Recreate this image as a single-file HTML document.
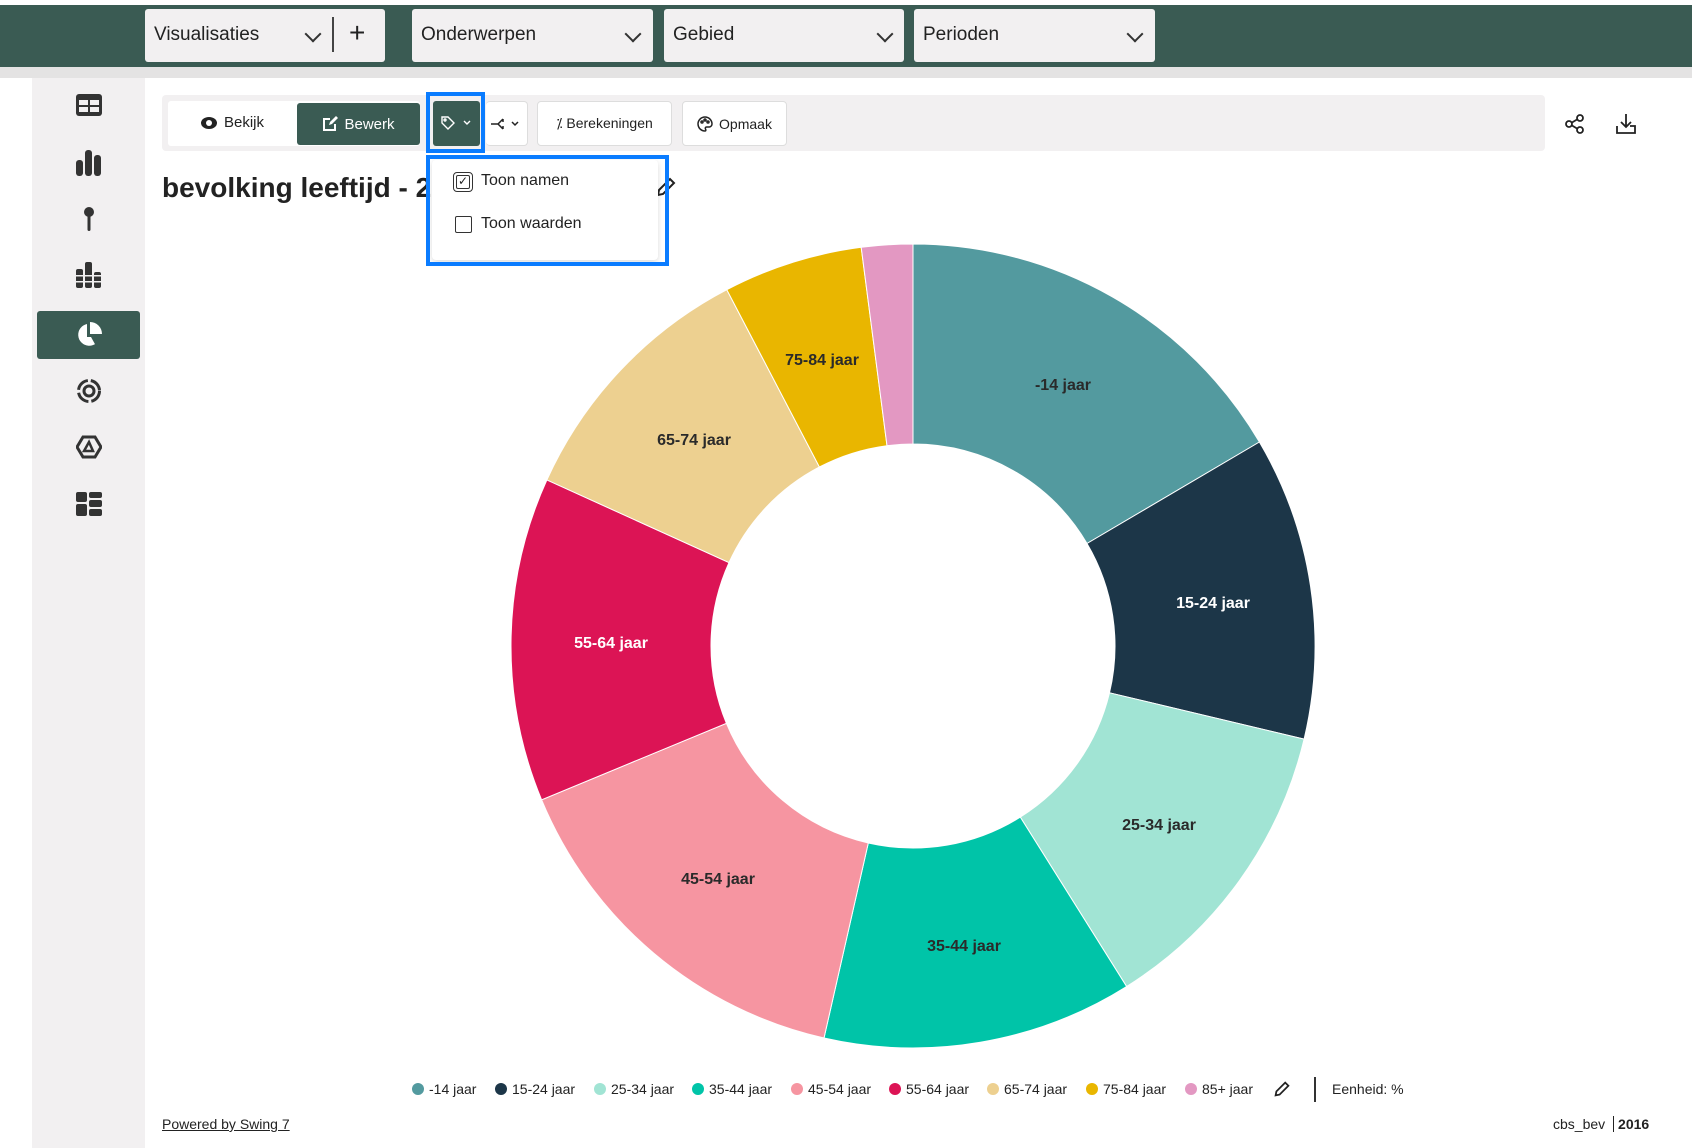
<!DOCTYPE html>
<html><head><meta charset="utf-8"><style>
*{box-sizing:border-box;margin:0;padding:0}
body{width:1692px;height:1148px;position:relative;overflow:hidden;background:#fff;font-family:"Liberation Sans",sans-serif;color:#222}
.abs{position:absolute}
.top{left:0;top:5px;width:1692px;height:62px;background:#3a5b53}
.dd{top:9px;height:53px;background:#f2f0f1;border-radius:3px;font-size:19px;color:#222;padding:15px 0 0 9px}
.chev{position:absolute;top:19px;width:12px;height:12px;border-right:2px solid #333;border-bottom:2px solid #333;transform:rotate(45deg)}
.btn{top:101px;height:45px;background:#fff;border:1px solid #ddd;border-radius:4px;font-size:14px;display:flex;align-items:center;justify-content:center;gap:6px}
.side svg{position:absolute}
.leg{top:1081px;font-size:14px;display:flex;align-items:center;gap:5px;color:#222}
.dot{width:12px;height:12px;border-radius:50%}
.lbl{font-size:16px;font-weight:bold;text-anchor:middle;fill:#2a2a2a}
</style></head><body>
<div class="abs" style="left:0;top:67px;width:1692px;height:11px;background:#e4e3e3"></div>
<div class="abs top"></div>
<div class="abs dd" style="left:145px;width:240px">Visualisaties<div class="chev" style="left:162px"></div><div class="abs" style="left:187px;top:8px;width:2px;height:35px;background:#444"></div><div class="abs" style="left:204px;top:8px;font-size:28px;font-weight:300">+</div></div>
<div class="abs dd" style="left:412px;width:241px">Onderwerpen<div class="chev" style="left:215px"></div></div>
<div class="abs dd" style="left:664px;width:240px">Gebied<div class="chev" style="left:215px"></div></div>
<div class="abs dd" style="left:914px;width:241px">Perioden<div class="chev" style="left:215px"></div></div>

<div class="abs side" style="left:32px;top:78px;width:113px;height:1070px;background:#f2f0f1">
<svg style="left:44px;top:16px" width="26" height="22" viewBox="0 0 26 22"><rect x="0" y="0" width="26" height="22" rx="3" fill="#333"/><rect x="3" y="6" width="9" height="5" fill="#f2f0f1"/><rect x="14" y="6" width="9" height="5" fill="#f2f0f1"/><rect x="3" y="13" width="9" height="5" fill="#f2f0f1"/><rect x="14" y="13" width="9" height="5" fill="#f2f0f1"/></svg>
<svg style="left:44px;top:72px" width="26" height="26"><rect x="0" y="10" width="7" height="16" rx="3" fill="#333"/><rect x="9" y="0" width="7" height="26" rx="3" fill="#333"/><rect x="18" y="5" width="7" height="21" rx="3" fill="#333"/></svg>
<svg style="left:44px;top:128px" width="26" height="26"><circle cx="13" cy="6" r="5" fill="#333"/><rect x="11.5" y="8" width="3" height="17" rx="1.5" fill="#333"/></svg>
<svg style="left:44px;top:184px" width="26" height="26"><g fill="#333"><rect x="0" y="7" width="7" height="19" rx="2"/><rect x="9" y="0" width="7" height="26" rx="2"/><rect x="18" y="10" width="7" height="16" rx="2"/></g><g fill="#f2f0f1"><rect x="0" y="13" width="26" height="1.5"/><rect x="0" y="19" width="26" height="1.5"/></g></svg>
<div class="abs" style="left:5px;top:233px;width:103px;height:48px;background:#3a5b53;border-radius:3px"></div>
<svg style="left:44px;top:244px" width="26" height="26" viewBox="0 0 26 26"><path d="M11 2 A11 11 0 1 0 24 15 L11 15 Z" fill="#fff"/><path d="M14 0 A12 12 0 0 1 26 12 L14 12 Z" fill="#fff"/><path d="M15 15 L25 15 L20 24Z" fill="#3a5b53"/></svg>
<svg style="left:44px;top:300px" width="26" height="26" viewBox="0 0 26 26"><circle cx="13" cy="13" r="10.5" fill="none" stroke="#333" stroke-width="3" stroke-dasharray="14 3"/><circle cx="13" cy="13" r="5" fill="none" stroke="#333" stroke-width="3"/></svg>
<svg style="left:44px;top:357px" width="26" height="24" viewBox="0 0 26 24"><path d="M7 2 L19 2 L25 12 L19 22 L7 22 L1 12 Z" fill="none" stroke="#333" stroke-width="3"/><path d="M13 7 L17 16 L8 16 Z" fill="none" stroke="#333" stroke-width="2.5"/></svg>
<svg style="left:44px;top:414px" width="26" height="24"><g fill="#333"><rect x="0" y="0" width="11" height="10" rx="2"/><rect x="0" y="12" width="11" height="12" rx="2"/><rect x="13" y="0" width="13" height="6" rx="2"/><rect x="13" y="8" width="13" height="7" rx="2"/><rect x="13" y="17" width="13" height="7" rx="2"/></g></svg>
</div>

<div class="abs" style="left:162px;top:95px;width:1383px;height:56px;background:#f2f0f1;border-radius:4px"></div>
<div class="abs" style="left:168px;top:101px;width:252px;height:45px;background:#fff;border-radius:3px"></div>
<div class="abs" style="left:200px;top:114px;font-size:15px;display:flex;align-items:center;gap:6px"><svg width="18" height="14" viewBox="0 0 18 14"><ellipse cx="9" cy="7" rx="8" ry="6" fill="#222"/><circle cx="9" cy="7" r="3" fill="#fff"/></svg>Bekijk</div>
<div class="abs" style="left:297px;top:103px;width:123px;height:42px;background:#3a5b53;border-radius:3px;color:#fff;font-size:15px;display:flex;align-items:center;justify-content:center;gap:6px"><svg width="16" height="16" viewBox="0 0 16 16" fill="none" stroke="#fff" stroke-width="2"><path d="M8 3H2v11h11V8"/><path d="M7 9l1-3 6-6 2 2-6 6z" fill="#fff" stroke="none"/></svg>Bewerk</div>
<div class="abs" style="left:433px;top:101px;width:47px;height:45px;background:#3a5b53;border-radius:3px"></div>
<svg class="abs" style="left:440px;top:115px" width="36" height="16" viewBox="0 0 36 16" fill="none" stroke="#fff" stroke-width="1.4"><path d="M2 2h6l6 6-6 6-6-6z"/><circle cx="5" cy="5" r="1"/><path d="M24 6l3 3 3-3"/></svg>
<div class="abs" style="left:426px;top:92px;width:59px;height:61px;border:4px solid #0a7cff"></div>
<div class="abs btn" style="left:486px;width:42px;border-left:none"><svg width="34" height="14" viewBox="0 0 34 14" fill="none" stroke="#222" stroke-width="1.5"><path d="M1 7h7l5-5M8 7l5 5M13 2v3M13 12V9"/><path d="M22 5l3 3 3-3"/></svg></div>
<div class="abs btn" style="left:537px;width:135px">⁒ Berekeningen</div>
<div class="abs btn" style="left:682px;width:105px"><svg width="16" height="16" viewBox="0 0 16 16" fill="none" stroke="#222" stroke-width="1.5"><path d="M8 1a7 7 0 1 0 0 14c1 0 1-1 .5-2s0-2 1-2H12a3 3 0 0 0 3-3A7 7 0 0 0 8 1z"/><circle cx="5" cy="6" r="1"/><circle cx="8" cy="4" r="1"/><circle cx="11" cy="6" r="1"/></svg>Opmaak</div>
<svg class="abs" style="left:1565px;top:114px" width="20" height="20" viewBox="0 0 20 20" fill="none" stroke="#222" stroke-width="1.8"><circle cx="4" cy="10" r="3"/><circle cx="15" cy="4" r="3"/><circle cx="15" cy="16" r="3"/><path d="M7 8.5l5-3M7 11.5l5 3"/></svg>
<svg class="abs" style="left:1615px;top:113px" width="22" height="22" viewBox="0 0 22 22" fill="none" stroke="#222" stroke-width="1.8"><path d="M11 1v13M6 9l5 5 5-5"/><path d="M2 13v7h18v-7h-5"/></svg>

<div class="abs" style="left:162px;top:172px;font-size:28px;font-weight:bold;color:#222">bevolking leeftijd - 2</div>
<svg class="abs" style="left:656px;top:177px" width="20" height="20" viewBox="0 0 20 20"><path d="M2 18l1-5L14 2l4 4L7 17z" fill="none" stroke="#222" stroke-width="2"/></svg>

<svg class="abs" style="left:0;top:0" width="1692" height="1148">
<g stroke="#fff" stroke-width="1">
<path fill="#539a9f" d="M913 244A402 402 0 0 1 1259.4 442L1087 543.5A202 202 0 0 0 913 444Z"/>
<path fill="#1c3648" d="M1259.4 442A402 402 0 0 1 1304.1 739.1L1109.5 692.8A202 202 0 0 0 1087 543.5Z"/>
<path fill="#a1e4d4" d="M1304.1 739.1A402 402 0 0 1 1126.6 986.5L1020.3 817.1A202 202 0 0 0 1109.5 692.8Z"/>
<path fill="#00c4a8" d="M1126.6 986.5A402 402 0 0 1 824 1038L868.3 843A202 202 0 0 0 1020.3 817.1Z"/>
<path fill="#f695a1" d="M824 1038A402 402 0 0 1 541.6 799.8L726.4 723.3A202 202 0 0 0 868.3 843Z"/>
<path fill="#dc1455" d="M541.6 799.8A402 402 0 0 1 546.9 479.9L729 562.6A202 202 0 0 0 726.4 723.3Z"/>
<path fill="#edd090" d="M546.9 479.9A402 402 0 0 1 726.8 289.7L819.4 467A202 202 0 0 0 729 562.6Z"/>
<path fill="#e9b600" d="M726.8 289.7A402 402 0 0 1 861.2 247.3L887 445.7A202 202 0 0 0 819.4 467Z"/>
<path fill="#e398c2" d="M861.2 247.3A402 402 0 0 1 913 244L913 444A202 202 0 0 0 887 445.7Z"/>
</g>
<text class="lbl" x="1063" y="390">-14 jaar</text>
<text class="lbl" x="1213" y="608" style="fill:#fff">15-24 jaar</text>
<text class="lbl" x="1159" y="830">25-34 jaar</text>
<text class="lbl" x="964" y="951">35-44 jaar</text>
<text class="lbl" x="718" y="884">45-54 jaar</text>
<text class="lbl" x="611" y="648" style="fill:#fff">55-64 jaar</text>
<text class="lbl" x="694" y="445">65-74 jaar</text>
<text class="lbl" x="822" y="365">75-84 jaar</text>
</svg>

<div class="abs" style="left:432px;top:160px;width:226px;height:100px;background:#fff;border-radius:4px;box-shadow:0 2px 6px rgba(0,0,0,.15)"></div>
<div class="abs" style="left:426px;top:155px;width:243px;height:111px;border:4px solid #0a7cff"></div>
<div class="abs" style="left:453px;top:172px;width:20px;height:20px;border:1.5px solid #333;border-radius:4px;padding:2px"><div style="width:100%;height:100%;border:1.5px solid #333;border-radius:2px;font-size:12px;line-height:11px;text-align:center">✓</div></div>
<div class="abs" style="left:481px;top:172px;font-size:16px">Toon namen</div>
<div class="abs" style="left:455px;top:216px;width:17px;height:17px;border:1.5px solid #333;border-radius:2px"></div>
<div class="abs" style="left:481px;top:215px;font-size:16px">Toon waarden</div>

<div class="abs leg" style="left:412px"><div class="dot" style="background:#539a9f"></div>-14 jaar</div>
<div class="abs leg" style="left:495px"><div class="dot" style="background:#1c3648"></div>15-24 jaar</div>
<div class="abs leg" style="left:594px"><div class="dot" style="background:#a1e4d4"></div>25-34 jaar</div>
<div class="abs leg" style="left:692px"><div class="dot" style="background:#00c4a8"></div>35-44 jaar</div>
<div class="abs leg" style="left:791px"><div class="dot" style="background:#f695a1"></div>45-54 jaar</div>
<div class="abs leg" style="left:889px"><div class="dot" style="background:#dc1455"></div>55-64 jaar</div>
<div class="abs leg" style="left:987px"><div class="dot" style="background:#edd090"></div>65-74 jaar</div>
<div class="abs leg" style="left:1086px"><div class="dot" style="background:#e9b600"></div>75-84 jaar</div>
<div class="abs leg" style="left:1185px"><div class="dot" style="background:#e398c2"></div>85+ jaar</div>
<svg class="abs" style="left:1274px;top:1081px" width="16" height="16" viewBox="0 0 20 20"><path d="M2 18l1-5L14 2l4 4L7 17z" fill="none" stroke="#222" stroke-width="2.2"/></svg>
<div class="abs" style="left:1314px;top:1077px;width:1.5px;height:25px;background:#333"></div>
<div class="abs leg" style="left:1332px">Eenheid: %</div>
<div class="abs" style="left:162px;top:1116px;font-size:14px;text-decoration:underline">Powered by Swing 7</div>
<div class="abs" style="left:1553px;top:1116px;font-size:14px">cbs_bev <span style="border-left:1.5px solid #222;padding-left:4px;font-weight:bold;margin-left:4px">2016</span></div>
</body></html>
